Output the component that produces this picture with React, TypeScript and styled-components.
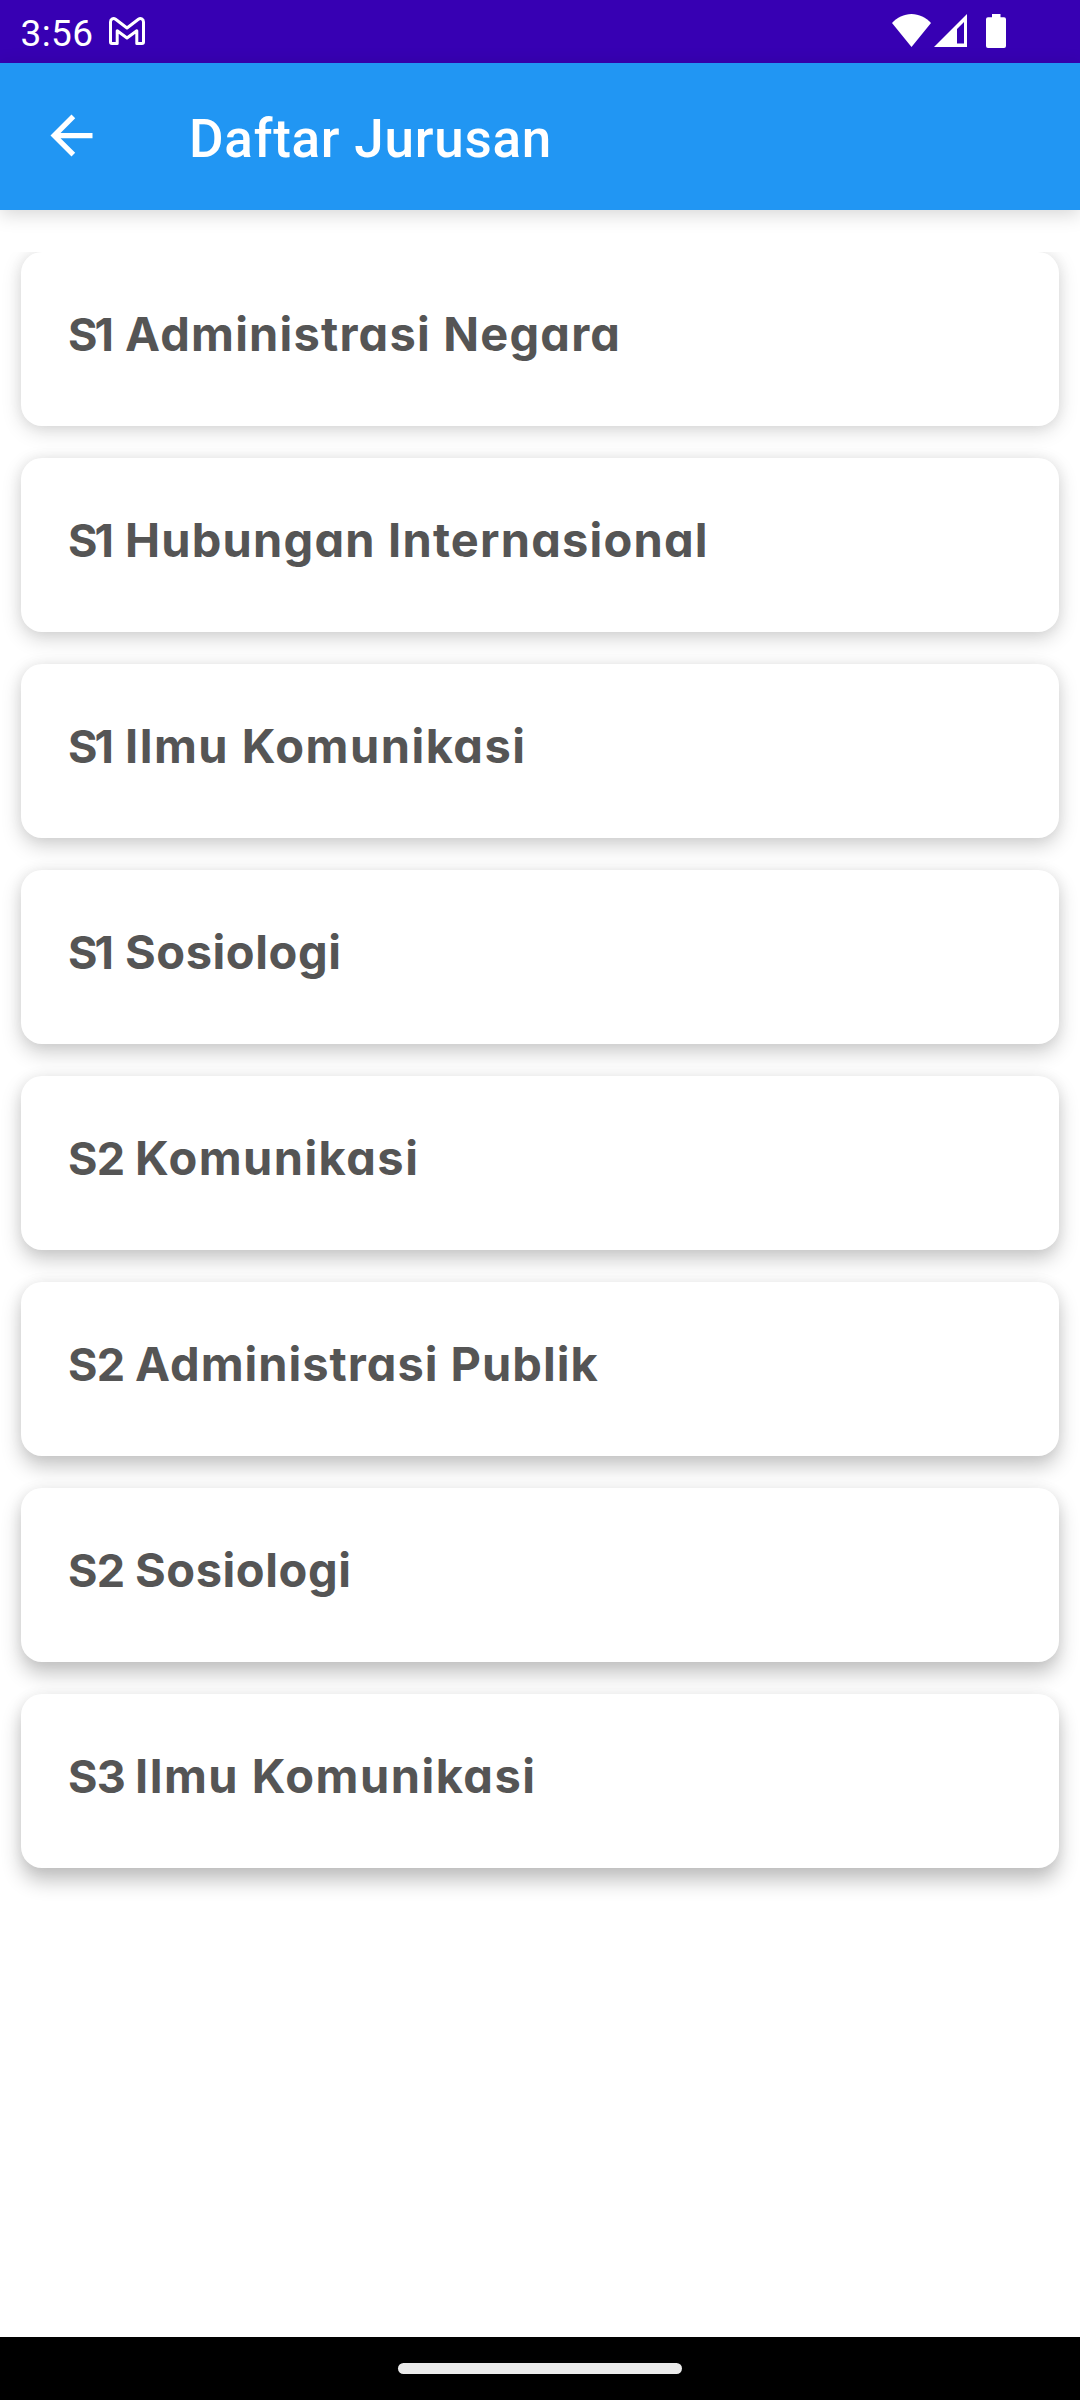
import React from 'react';
import styled, { createGlobalStyle } from 'styled-components';

const GlobalStyle = createGlobalStyle`
  * { box-sizing: border-box; }
  body { margin: 0; background: #fff; }
`;

const Screen = styled.div`
  display: flex;
  flex-direction: column;
  width: 1080px;
  height: 2400px;
  overflow: hidden;
  background: #fff;
  font-family: Roboto, 'Noto Sans', sans-serif;
`;

const StatusBar = styled.header`
  display: flex;
  align-items: flex-start;
  justify-content: space-between;
  flex: none;
  height: 63px;
  padding: 0 74px 0 20.5px;
  background: #3700b3;
  color: #fff;
`;

const StatusGroup = styled.div<{ $gap: number; $top: number }>`
  display: flex;
  align-items: flex-start;
  gap: ${(p) => p.$gap}px;
  padding-top: ${(p) => p.$top}px;
`;

const Clock = styled.span`
  width: 72.5px;
  font-size: 37px;
  line-height: 45px;
  letter-spacing: 0.4px;
  white-space: nowrap;
`;

const Glyph = styled.svg`
  display: block;
  flex: none;
`;

const MailGlyph = styled(Glyph)`
  margin-top: 6px;
`;

const BatteryGlyph = styled(Glyph)`
  margin-left: 16px;
`;

const AppBar = styled.nav`
  display: flex;
  align-items: center;
  flex: none;
  height: 147px;
  padding: 0 40px;
  background: #2196f3;
  color: #fff;
  box-shadow: 0 4px 18px rgba(0, 0, 0, 0.17);
`;

const BackButton = styled.button`
  display: flex;
  width: 63px;
  height: 63px;
  padding: 0;
  margin-bottom: 2px;
  border: 0;
  background: none;
  color: inherit;
`;

const Title = styled.h1`
  margin: 4px 0 0 86px;
  font-size: 53px;
  font-weight: 500;
  line-height: 62px;
  letter-spacing: 0.75px;
  white-space: nowrap;
`;

const List = styled.main`
  display: flex;
  flex-direction: column;
  flex: 1;
  gap: 32px;
  margin-top: 42px;
  padding: 0 21px;
  overflow: hidden;
`;

const Card = styled.article<{ $depth: number }>`
  display: flex;
  flex: none;
  height: 174px;
  padding: 52px 47px 0;
  border-radius: 21px;
  background: #fff;
  box-shadow:
    0 0 14px rgba(0, 0, 0, 0.06),
    0 ${(p) => 5 + p.$depth * 1.1}px 20px rgba(0, 0, 0, ${(p) => 0.15 + p.$depth * 0.013});
`;

const Heading = styled.h2`
  display: flex;
  align-items: baseline;
  margin: 0;
  color: #555;
  font-family: Inter, 'Open Sans', sans-serif;
  font-size: 47px;
  font-weight: 650;
  line-height: 60px;
  font-feature-settings: 'cv11' 1;
  white-space: pre;
`;

const Level = styled.span<{ $first: boolean }>`
  width: ${(p) => (p.$first ? 57 : 67)}px;
  font-size: 45px;
  letter-spacing: ${(p) => (p.$first ? -3 : -0.8)}px;
`;

const Major = styled.span<{ $spacing: number }>`
  letter-spacing: ${(p) => p.$spacing}px;
`;

const programs = [
  { level: 'S1', major: 'Administrasi Negara', spacing: 1.2 },
  { level: 'S1', major: 'Hubungan Internasional', spacing: 1.2 },
  { level: 'S1', major: 'Ilmu Komunikasi', spacing: 1.5 },
  { level: 'S1', major: 'Sosiologi', spacing: 0.55 },
  { level: 'S2', major: 'Komunikasi', spacing: 1.45 },
  { level: 'S2', major: 'Administrasi Publik', spacing: 1 },
  { level: 'S2', major: 'Sosiologi', spacing: 0.55 },
  { level: 'S3', major: 'Ilmu Komunikasi', spacing: 1.5 },
];

const NavigationBar = styled.footer`
  display: flex;
  justify-content: center;
  flex: none;
  height: 63px;
  padding-top: 26px;
  background: #000;
`;

const HomeHandle = styled.div`
  width: 284px;
  height: 11px;
  border-radius: 6px;
  background: #ebebeb;
`;

export default function App() {
  return (
    <>
      <GlobalStyle />
      <Screen>
        <StatusBar>
          <StatusGroup $gap={16} $top={11}>
            <Clock>3:56</Clock>
            <MailGlyph width="36" height="28" viewBox="0 0 36 28" fill="none" stroke="#fff" strokeWidth="3" strokeLinejoin="round">
              <path d="M1.5 5C1.5 1.8 4.4 0.7 6.6 2.3L18 11L29.4 2.3C31.6 0.7 34.5 1.8 34.5 5V25Q34.5 26.5 33 26.5H27.8V13.8L18 21L8.2 13.8V26.5H3Q1.5 26.5 1.5 25Z" />
            </MailGlyph>
          </StatusGroup>
          <StatusGroup $gap={3} $top={14}>
            <Glyph width="39" height="33" viewBox="0 0 39 33" fill="#fff">
              <path d="M0 9C5 3.5 12 0 19.5 0S34 3.5 39 9L19.5 33Z" />
            </Glyph>
            <Glyph width="33" height="33" viewBox="0 0 33 33" fill="#fff" fillRule="evenodd">
              <path d="M33 0V33H0ZM30 8L23 15V29.5H30Z" />
            </Glyph>
            <BatteryGlyph width="20" height="34" viewBox="0 0 20 34" fill="#fff">
              <path d="M6 0H14.5V3.3H18Q20 3.3 20 5.3V32Q20 34 18 34H2Q0 34 0 32V5.3Q0 3.3 2 3.3H6Z" />
            </BatteryGlyph>
          </StatusGroup>
        </StatusBar>
        <AppBar>
          <BackButton aria-label="Kembali">
            <Glyph width="63" height="63" viewBox="0 0 24 24" fill="currentColor">
              <path d="M20 11H7.83l5.59-5.59L12 4l-8 8 8 8 1.41-1.41L7.83 13H20v-2z" />
            </Glyph>
          </BackButton>
          <Title>Daftar Jurusan</Title>
        </AppBar>
        <List>
          {programs.map(({ level, major, spacing }, index) => (
            <Card key={level + major} $depth={index}>
              <Heading>
                <Level $first={level === 'S1'}>{level} </Level>
                <Major $spacing={spacing}>{major}</Major>
              </Heading>
            </Card>
          ))}
        </List>
        <NavigationBar>
          <HomeHandle />
        </NavigationBar>
      </Screen>
    </>
  );
}
